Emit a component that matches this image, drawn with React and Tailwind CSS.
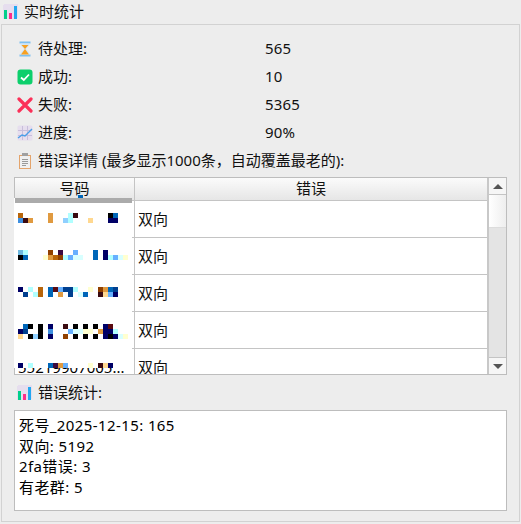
import React from 'react';

const FONT = 'font-["Noto_Sans","Noto_Sans_CJK_SC",sans-serif]';

// colour key for the redacted number cells
const C = {
  n: '#000066', N: '#004090', k: '#000000', d: '#3a0a10', p: '#3a0a40', b: '#0066b8', B: '#3d8fe0',
  l: '#66b0ff', L: '#90d0ff', c: '#b0ffff', C: '#d8ffff', y: '#ffffd0', Y: '#ffd890', o: '#e09a40',
  O: '#b8650a', r: '#904000', s: '#6cb8e0', m: '#5a0a10',
};

const MOSAICS = [
  ['O.....o...cd......kb', 'Bdo...o..Lc...Y...nn'],
  ['sc....r.p..l...b.n', 'kb...yoOrclCC..b.nclCy'],
  ['n.c.O.bmlNNc..y.robN', '.N.cO.b.o.N.Cb..dYln'],
  ['.bk.k.n..d.k.k.k.nm', 'nN..k.B...lCCyy.onnc', 'Y.kLk.n..r.k.k.k.nknCy'],
  ['n.c...bpol....y.dYn'],
];

function Mosaic({ rows }) {
  return (
    <svg width="115" height={rows.length * 5} shapeRendering="crispEdges" className="block">
      {rows.map((row, y) =>
        row.split('').map((ch, x) =>
          C[ch] ? <rect key={x} x={x * 5} y={y * 5} width="5" height="5" fill={C[ch]} /> : null
        )
      )}
    </svg>
  );
}

function BarsIcon() {
  return (
    <svg width="15" height="15" viewBox="0 0 15 15" shapeRendering="crispEdges" className="shrink-0">
      <rect x="0" y="0" width="15" height="15" rx="2" fill="#e6deee" />
      <rect x="1" y="6" width="3" height="9" fill="#00d08a" />
      <rect x="6" y="9" width="3" height="6" fill="#ff2d8a" />
      <rect x="11" y="2" width="3" height="13" fill="#22a8f0" />
    </svg>
  );
}

function HourglassIcon() {
  return (
    <svg width="16" height="16" viewBox="0 0 16 16">
      <path d="M2.500 1.500h11M2.500 14.500h11" stroke="#7fc0f0" strokeWidth="2.200" />
      <path d="M3.500 2.500h9c0 3-3 4-3.500 5.500.5 1.500 3.500 2.500 3.500 5.500h-9c0-3 3-4 3.500-5.500C6.500 6.500 3.500 5.500 3.500 2.500z" fill="#cfe6f7" />
      <path d="M4.500 4h7L8 8zM8 8l4 5.500H4z" fill="#f8a020" />
    </svg>
  );
}

function CheckIcon() {
  return (
    <svg width="16" height="16" viewBox="0 0 16 16">
      <rect x="0.500" y="0.500" width="15" height="15" rx="3" fill="#0ccf6c" />
      <path d="M4 8.500l2.800 2.500L12 5.500" fill="none" stroke="#fff" strokeWidth="1.800" />
    </svg>
  );
}

function CrossIcon() {
  return (
    <svg width="16" height="16" viewBox="0 0 16 16">
      <path d="M2 2l12 12M14 2L2 14" stroke="#fb3058" strokeWidth="3.200" strokeLinecap="round" />
    </svg>
  );
}

function ChartIcon() {
  return (
    <svg width="16" height="16" viewBox="0 0 16 16">
      <rect x="0.500" y="0.500" width="15" height="15" rx="1.500" fill="#e6deee" />
      <path d="M5.500 1v14M10.500 1v14M1 5.500h14M1 10.500h14" stroke="#c8bedb" strokeWidth="1" />
      <path d="M1 13l4-3 3 1 7-7" fill="none" stroke="#4a9ee8" strokeWidth="1.400" />
    </svg>
  );
}

function ClipboardIcon() {
  return (
    <svg width="16" height="16" viewBox="0 0 16 16" shapeRendering="crispEdges">
      <rect x="2" y="2" width="12" height="14" rx="1" fill="#e4a46c" />
      <rect x="3" y="3" width="10" height="12" fill="#f0f0f0" />
      <rect x="5" y="0" width="6" height="3" fill="#a0a0a0" />
      <path d="M5 6h6M5 8h6M5 10h6M5 12h4" stroke="#9a9a9a" strokeWidth="1" />
    </svg>
  );
}

function StatRow({ icon, label, value }) {
  return (
    <div className="flex h-[28px] items-center">
      <div className="w-[21px]">{icon}</div>
      <div className="w-[227px] pb-[2px]">{label}</div>
      <div className="pb-[2px] tracking-[0.2px]">{value}</div>
    </div>
  );
}

function Row({ rows, last, number }) {
  return (
    <div className="flex h-[37px] shrink-0 border-b border-[#c4c4c4] bg-white">
      <div className="relative -mb-px w-[117px] shrink-0 overflow-hidden bg-white">
        {number && <div className="absolute left-[3px] top-[8px] text-black">55219907005...</div>}
        <div className={`relative pl-[3px] ${last ? 'h-[19px] bg-white pt-[14px]' : 'pt-[12px]'}`}>
          <Mosaic rows={rows} />
        </div>
      </div>
      <div className="w-[2px] shrink-0" />
      <div className="flex flex-1 items-center border-l border-[#c4c4c4] pl-[3px]">双向</div>
    </div>
  );
}

export default function App() {
  return (
    <div className={`${FONT} h-[524px] w-[521px] overflow-hidden bg-[#ededed] text-[15px] leading-[20px] text-[#111]`}>
      <div className="flex h-[24px] items-center gap-[6px] pb-[2px] pl-[3px]">
        <BarsIcon />
        <span>实时统计</span>
      </div>
      <div className="mx-[1px] h-[498px] border border-[#d2d2d2] px-[12px] pt-[10px]">
        <div className="pl-[3px]">
          <StatRow icon={<HourglassIcon />} label="待处理:" value="565" />
          <StatRow icon={<CheckIcon />} label="成功:" value="10" />
          <StatRow icon={<CrossIcon />} label="失败:" value="5365" />
          <StatRow icon={<ChartIcon />} label="进度:" value="90%" />
          <div className="flex h-[28px] items-center">
            <div className="w-[21px]"><ClipboardIcon /></div>
            <div className="pb-[2px]">错误详情 (最多显示1000条，自动覆盖最老的):</div>
          </div>
        </div>

        <div className="relative mt-[2px] flex h-[198px] w-[493px] border border-[#bdbdbd] bg-white">
          <div className="absolute -left-px top-[20px] h-[170px] w-px bg-white" />
          <div className="absolute left-[63px] top-[17px] z-20 h-[3px] w-[5px] bg-[#0066b8]" />
          <div className="flex min-w-0 flex-1 flex-col overflow-hidden border-r-[2px] border-[#c8c8c8]">
            <div className="flex h-[23px] shrink-0 border-b border-[#c4c4c4] bg-gradient-to-b from-[#fbfbfb] to-[#e6e6e6] text-center">
              <div className="w-[120px] shrink-0 border-r border-[#c4c4c4]">号码</div>
              <div className="flex-1">错误</div>
            </div>
            <div className="relative z-10 -mb-[2px] -mt-[3px] h-[5px] w-[117px] shrink-0 bg-[#ababab]" />
            <Row rows={MOSAICS[0]} />
            <Row rows={MOSAICS[1]} />
            <Row rows={MOSAICS[2]} />
            <Row rows={MOSAICS[3]} />
            <Row rows={MOSAICS[4]} last number />
          </div>
          <div className="flex w-[17px] shrink-0 flex-col bg-[#e4e4e4]">
            <div className="flex h-[17px] items-center justify-center border-b border-[#c4c4c4] bg-[#f6f6f6]">
              <div className="h-0 w-0 border-x-[5px] border-b-[5px] border-x-transparent border-b-[#555]" />
            </div>
            <div className="h-[33px] border-b border-[#dcdcdc] bg-gradient-to-r from-[#ffffff] to-[#eeeeee]" />
            <div className="flex-1" />
            <div className="flex h-[17px] items-center justify-center border-t border-[#c4c4c4] bg-[#f6f6f6]">
              <div className="h-0 w-0 border-x-[5px] border-t-[5px] border-x-transparent border-t-[#555]" />
            </div>
          </div>
        </div>

        <div className="flex h-[35px] items-center gap-[6px] pl-[3px]">
          <BarsIcon />
          <span className="pb-[2px]">错误统计:</span>
        </div>
        <div className="h-[101px] w-[493px] border border-[#bdbdbd] bg-white px-[4px] pt-[4px] leading-[20.5px] tracking-[0.4px] text-black">
          <div>死号_2025-12-15: 165</div>
          <div>双向: 5192</div>
          <div>2fa错误: 3</div>
          <div>有老群: 5</div>
        </div>
      </div>
    </div>
  );
}
